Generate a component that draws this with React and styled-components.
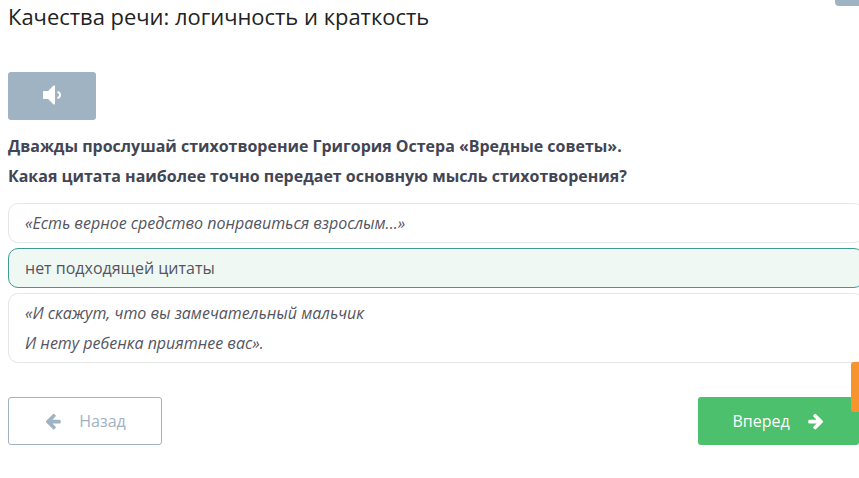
import React from 'react';
import styled, { createGlobalStyle } from 'styled-components';

const Global = createGlobalStyle`
  html, body { margin: 0; padding: 0; background: #fff; overflow: hidden; }
  body { font-family: "Open Sans", "Liberation Sans", sans-serif; }
`;
const Page = styled.div`
  position: relative;
  width: 859px;
  height: 478px;
  box-sizing: border-box;
  padding: 2px 0 0 8px;
  overflow: hidden;
`;
const Title = styled.h1`
  margin: 0;
  font-size: 21.95px;
  line-height: 30px;
  font-weight: 400;
  color: #222;
`;
const AudioButton = styled.button`
  display: flex;
  align-items: center;
  justify-content: center;
  width: 88px;
  height: 48px;
  margin-top: 40px;
  padding: 0 0 2px;
  border: 0;
  border-radius: 3px;
  background: #9fb3c2;
  color: #fff;
`;
const Question = styled.p`
  margin: ${p => p.$first ? '11px' : '0'} 0 0;
  font-size: 15.98px;
  line-height: 30px;
  font-weight: 700;
  color: #424554;
`;
const Options = styled.div`
  display: flex;
  flex-direction: column;
  gap: 5px;
  margin: 12px -5px 0 0;
`;
const Option = styled.div`
  box-sizing: border-box;
  padding: 4px 16px;
  min-height: 40px;
  border: 1px solid ${p => p.$selected ? '#3f9a92' : '#e6e6e6'};
  border-radius: 10px;
  background: ${p => p.$selected ? '#f0f8f4' : '#fff'};
  color: #54555f;
  font-size: 16px;
  line-height: 30px;
  font-style: ${p => p.$selected ? 'normal' : 'italic'};
`;
const Nav = styled.div`
  display: flex;
  justify-content: space-between;
  margin-top: 34px;
`;
const NavButton = styled.button`
  display: flex;
  align-items: center;
  justify-content: center;
  box-sizing: border-box;
  height: 48px;
  padding: 0;
  border-radius: 3px;
  font-family: inherit;
  font-size: 16px;
`;
const BackButton = styled(NavButton)`
  gap: 17px;
  width: 154px;
  border: 1px solid #9fb3c2;
  background: #fff;
  color: #9fb3c2;
`;
const NextButton = styled(NavButton)`
  gap: 17px;
  width: 161px;
  border: 0;
  background: #4cc06c;
  color: #fff;
`;
const TopTab = styled.div`
  position: absolute;
  top: 0;
  right: 0;
  width: 24px;
  height: 6px;
  border-bottom-left-radius: 4px;
  background: #9fb3c2;
`;
const SideTab = styled.div`
  position: absolute;
  top: 362px;
  right: 0;
  width: 8px;
  height: 50px;
  border-radius: 3px 0 0 3px;
  background: #f7942e;
`;

const Glyph = ({ d, size }) => (
  <svg width={size} height={size} viewBox="0 0 1792 1792" fill="currentColor" aria-hidden="true">
    <path d={d} />
  </svg>
);
const VOLUME = "M1088 352v1088q0 26-19 45t-45 19-45-19l-333-333h-262q-26 0-45-19t-19-45v-384q0-26 19-45t45-19h262l333-333q19-19 45-19t45 19 19 45zm384 544q0 76-42.500 141.500t-112.500 93.500q-10 5-25 5-26 0-45-18.500t-19-45.500q0-21 12-35.500t29-25 34-23 29-36 12-56.500-12-56.500-29-36-34-23-29-25-12-35.500q0-27 19-45.500t45-18.500q15 0 25 5 70 27 112.500 93t42.500 142z";
const LEFT = "M1664 896v128q0 53-32.500 90.500t-84.500 37.500h-704l293 294q38 36 38 90t-38 90l-75 75q-38 38-90 38-53 0-91-38l-651-651q-37-35-37-90 0-54 37-91l651-650q38-38 91-38 52 0 90 38l75 74q38 38 38 91t-38 91l-293 293h704q52 0 84.500 37.500t32.500 90.500z";
const RIGHT = "M1600 960q0 54-37 91l-651 651q-39 37-91 37-51 0-90-37l-75-75q-38-38-38-91t38-91l293-293h-704q-52 0-84.500-37.500t-32.500-90.500v-128q0-53 32.500-90.500t84.500-37.500h704l-293-294q-38-36-38-90t38-90l75-75q38-38 90-38 53 0 91 38l651 651q37 35 37 90z";

export default function App() {
  return (
    <Page>
      <Global />
      <TopTab />
      <Title>Качества речи: логичность и краткость</Title>
      <AudioButton aria-label="Прослушать"><Glyph d={VOLUME} size={28} /></AudioButton>
      <Question $first>Дважды прослушай стихотворение Григория Остера «Вредные советы».</Question>
      <Question>Какая цитата наиболее точно передает основную мысль стихотворения?</Question>
      <Options>
        <Option>«Есть верное средство понравиться взрослым...»</Option>
        <Option $selected>нет подходящей цитаты</Option>
        <Option>«И скажут, что вы замечательный мальчик<br />И нету ребенка приятнее вас».</Option>
      </Options>
      <Nav>
        <BackButton><Glyph d={LEFT} size={18} />Назад</BackButton>
        <NextButton>Вперед<Glyph d={RIGHT} size={18} /></NextButton>
      </Nav>
      <SideTab />
    </Page>
  );
}
